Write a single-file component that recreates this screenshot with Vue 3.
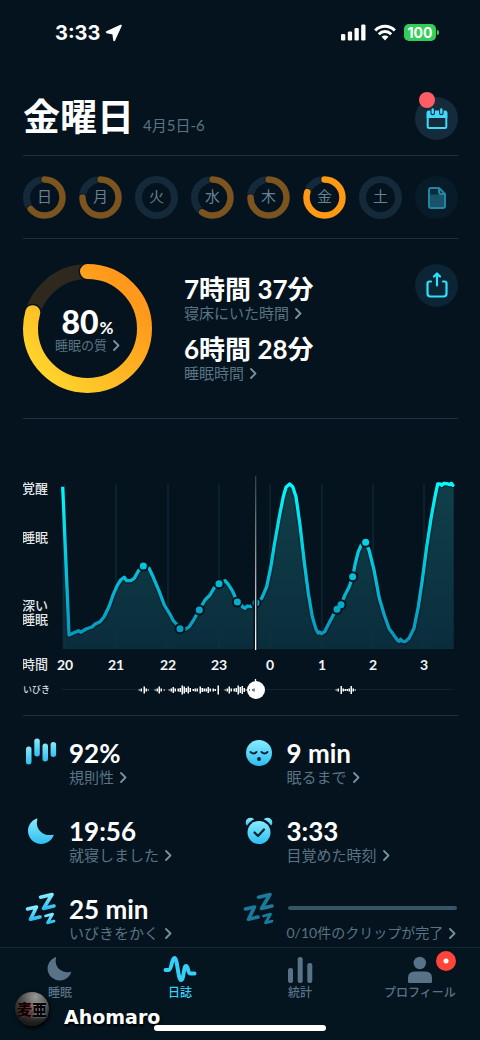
<script setup>
import { ref } from 'vue'

const position = ref(495)

const days = [
  { name: '日', progress: 64 },
  { name: '月', progress: 75 },
  { name: '火', progress: 0 },
  { name: '水', progress: 60 },
  { name: '木', progress: 75 },
  { name: '金', progress: 80, active: true },
  { name: '土', progress: 0 },
]

const metrics = [
  { icon: 'bars', value: '92%', label: '規則性' },
  { icon: 'face', value: '9 min', label: '眠るまで' },
  { icon: 'moon', value: '19:56', label: '就寝しました' },
  { icon: 'alarm', value: '3:33', label: '目覚めた時刻' },
  { icon: 'zzz', value: '25 min', label: 'いびきをかく' },
]

const tabs = [
  { icon: 'moon', label: '睡眠' },
  { icon: 'pulse', label: '日誌', active: true },
  { icon: 'stats', label: '統計' },
  { icon: 'person', label: 'プロフィール', badge: true },
]

/* Sleep depth samples, in thirds of a chart unit */
const samples = [
  [188, 50], [207, 495], [222, 488], [236, 482], [242, 487], [258, 477], [276, 471], [284, 463],
  [300, 455], [312, 441], [328, 408], [340, 373], [352, 346], [362, 330], [373, 322], [380, 332],
  [392, 332], [403, 325], [415, 303], [430, 289], [447, 295], [460, 322], [478, 365], [493, 405],
  [510, 433], [520, 452], [540, 474], [558, 477], [568, 470], [582, 448], [598, 420], [615, 390],
  [630, 375], [643, 353], [657, 342], [675, 332], [685, 343], [697, 362], [712, 395], [722, 402],
  [728, 411], [735, 415], [742, 408], [752, 410], [760, 402], [768, 398], [785, 385], [800, 350],
  [812, 293], [823, 225], [838, 140], [850, 80], [858, 52], [869, 42], [878, 50], [888, 80],
  [900, 165], [912, 270], [925, 370], [937, 440], [948, 478], [954, 489], [959, 486], [965, 491],
  [974, 485], [984, 465], [1000, 435], [1011, 418], [1023, 403], [1035, 375], [1047, 352],
  [1058, 320], [1066, 280], [1075, 245], [1084, 225], [1097, 217], [1107, 240], [1122, 300],
  [1138, 385], [1153, 435], [1168, 478], [1172, 482], [1192, 510], [1198, 514], [1202, 508],
  [1208, 514], [1215, 515], [1227, 505], [1242, 475], [1255, 410], [1267, 330], [1280, 230],
  [1294, 140], [1305, 80], [1313, 42], [1320, 42], [1326, 46], [1331, 40], [1340, 41],
  [1350, 44], [1354, 40], [1358, 46], [1361, 42],
].map(([x, y]) => [x / 3, 470 + y / 3])

const line = 'M' + samples.map(([x, y]) => `${x.toFixed(1)} ${y.toFixed(1)}`).join('L')
const area = `${line}V649H62.7Z`

const markers = [
  [430, 288], [540, 476], [598, 420], [657, 341], [712, 396], [768, 398],
  [1011, 418], [1023, 404], [1058, 320], [1097, 217],
].map(([x, y]) => [x / 3, 470 + y / 3])

const hours = ['20', '21', '22', '23', '0', '1', '2', '3'].map((label, i) => ({
  label,
  x: Math.round(65 + i * 51.3),
}))

/* Snoring waveform: offset and height of each bar */
const wave = [
  [77, 1], [79, 3], [82, 7], [84, 3], [86, 1], [93, 1], [95, 3], [97, 7], [99, 3], [102, 1],
  [107, 1], [109, 3], [111, 6], [113, 3], [116, 3], [118, 4], [120, 9], [122, 7], [124, 4],
  [126, 7], [128, 4], [131, 2], [133, 3], [135, 3], [138, 7], [140, 4], [142, 3], [144, 3],
  [146, 6], [148, 3], [151, 3], [153, 2], [156, 9], [163, 1], [165, 3], [167, 7], [169, 3],
  [172, 3], [174, 4], [176, 9], [178, 6], [180, 8], [182, 4], [184, 1],
  [274, 1], [276, 3], [279, 8], [281, 3], [283, 2], [285, 2], [287, 3], [289, 8], [291, 3], [293, 1],
]
</script>

<template>
  <div class="app">
    <svg class="defs" width="0" height="0" aria-hidden="true">
      <defs>
        <linearGradient id="ice" x1="0" y1="0" x2="0" y2="1">
          <stop offset="0" stop-color="#86ecff" />
          <stop offset="1" stop-color="#2fbdf0" />
        </linearGradient>
        <symbol id="chevron" viewBox="0 0 8 12">
          <path d="M2 2l4.500 4.500L2 11" fill="none" stroke="currentColor" stroke-width="1.800" stroke-linecap="round" stroke-linejoin="round" />
        </symbol>
        <symbol id="moon" viewBox="0 0 36 36">
          <path d="M13.600 5.600c.5-.3 1 .1.8.7-1.500 5.200.200 9.800 3.600 12.600 3.500 2.900 7.900 3.700 11.700 2.800.7-.2 1.200.3.900.9C28.600 27.600 23.900 31 18.300 31 10.900 31 5 25.100 5 18c0-5.400 3.300-10.200 8.600-12.400Z" />
        </symbol>
        <symbol id="zzz" viewBox="0 0 36 36">
          <g fill="none" stroke-width="3.600" stroke-linecap="round" stroke-linejoin="round">
            <path d="M17.500 6.200l11.500-2.700-8.500 14 10.500-2.500" />
            <path d="M4.500 18l9-2-6 12.300 9.500-2.300" />
            <path d="M22.500 25l7-1.800-5 8.600 6.500-1.600" stroke-width="2.800" />
          </g>
        </symbol>
      </defs>
    </svg>

    <main class="content">
      <div class="status">
        <div class="clock">
          <span>3:33</span>
          <svg width="18" height="18" viewBox="0 0 18 18"><path d="M15.800 1.700 1.800 8.200l6.500 1.300.900 6.700Z" fill="#fff" stroke="#fff" stroke-width="2" stroke-linejoin="round" /></svg>
        </div>
        <div class="signals">
          <svg width="25" height="17" viewBox="0 0 25 17" fill="#fff">
            <rect x="0" y="10" width="4.300" height="6.500" rx="1.300" /><rect x="6.800" y="7.500" width="4.300" height="9" rx="1.300" />
            <rect x="13.500" y="4" width="4.300" height="12.500" rx="1.300" /><rect x="20.200" y=".5" width="4.300" height="16" rx="1.300" />
          </svg>
          <svg width="22" height="17" viewBox="0 0 22 17">
            <g fill="none" stroke="#fff" stroke-width="3">
              <path d="M1.200 6.500c5.500-5.600 14.100-5.600 19.600 0" /><path d="M4.800 10.200c3.500-3.500 8.900-3.500 12.400 0" />
            </g>
            <path d="M7.500 12.800c2-1.900 5-1.900 7 0L11 16.400Z" fill="#fff" />
          </svg>
          <span class="battery">100</span>
        </div>
      </div>

      <header class="heading">
        <h1>金曜日</h1>
        <span class="date">4月5日-6</span>
        <button class="round calendar" type="button" aria-label="カレンダー">
          <svg width="22" height="22" viewBox="0 0 22 22">
            <rect x="1.700" y="4" width="18.600" height="16" rx="1.500" fill="none" stroke="#41d9fb" stroke-width="2" />
            <path d="M.7 4.500q0-2 2-2h16.600q2 0 2 2v5.500H.7Z" fill="#41d9fb" />
            <path d="M6.700 1v4M15.300 1v4" stroke="#152a3a" stroke-width="4.600" stroke-linecap="round" />
            <path d="M6.700 1.500v3.200M15.300 1.500v3.200" stroke="#41d9fb" stroke-width="2.400" stroke-linecap="round" />
          </svg>
          <span class="dot"></span>
        </button>
      </header>

      <nav class="week" aria-label="曜日">
        <button v-for="day in days" :key="day.name" class="day" :class="{ active: day.active }" type="button">
          <svg viewBox="0 0 43 43">
            <g fill="none" transform="rotate(-90 21.500 21.500)">
              <circle cx="21.500" cy="21.500" r="18" stroke="#142a3a" stroke-width="7" />
              <template v-if="day.progress">
                <circle cx="21.500" cy="21.500" r="18" pathLength="100" :stroke-dasharray="`${day.progress} 100`" stroke="#04131d" stroke-width="8" stroke-linecap="round" />
                <circle class="arc" cx="21.500" cy="21.500" r="18" pathLength="100" :stroke-dasharray="`${day.progress} 100`" stroke-width="6.500" stroke-linecap="round" />
              </template>
            </g>
          </svg>
          <span>{{ day.name }}</span>
        </button>
        <button class="round notes" type="button" aria-label="メモ">
          <svg width="20" height="24" viewBox="0 0 20 24">
            <path d="M4 2h8l6 6v12q0 2-2 2H4q-2 0-2-2V4q0-2 2-2Z" fill="#0c2b3a" />
            <path d="M2 8.500h16V20q0 2-2 2H4q-2 0-2-2Z" fill="#19536a" />
            <path d="M4 2h8l6 6v12q0 2-2 2H4q-2 0-2-2V4q0-2 2-2ZM12 2v4q0 2 2 2h4" fill="none" stroke="#2485a2" stroke-width="2" stroke-linejoin="round" />
          </svg>
        </button>
      </nav>

      <section class="summary">
        <a class="quality" href="#quality">
          <svg viewBox="0 0 129 129">
            <defs>
              <linearGradient id="gold" x1=".2" y1="0" x2=".9" y2=".75">
                <stop offset="0" stop-color="#ffd52c" /><stop offset="1" stop-color="#ff991b" />
              </linearGradient>
            </defs>
            <g fill="none" transform="rotate(-90 64.500 64.500)">
              <circle cx="64.500" cy="64.500" r="57" stroke="#2e281f" stroke-width="15" />
              <circle cx="64.500" cy="64.500" r="57" pathLength="100" stroke-dasharray="79.500 100" stroke="#04131d" stroke-width="18" stroke-linecap="round" />
              <circle cx="64.500" cy="64.500" r="57" pathLength="100" stroke-dasharray="79.500 100" stroke="url(#gold)" stroke-width="15" stroke-linecap="round" />
            </g>
          </svg>
          <span class="score">80<small>%</small></span>
          <span class="label small">睡眠の質<svg class="chevron"><use href="#chevron" /></svg></span>
        </a>
        <div class="times">
          <a href="#bed"><strong>7時間 37分</strong><span class="label">寝床にいた時間<svg class="chevron"><use href="#chevron" /></svg></span></a>
          <a href="#asleep"><strong>6時間 28分</strong><span class="label">睡眠時間<svg class="chevron"><use href="#chevron" /></svg></span></a>
        </div>
        <button class="round share" type="button" aria-label="共有">
          <svg width="24" height="28" viewBox="0 0 24 28" fill="none" stroke="#2fe0fa" stroke-width="2.200" stroke-linecap="round" stroke-linejoin="round">
            <path d="M6 9.500H4.500Q2.500 9.500 2.500 11.500v10q0 3 3 3h13q3 0 3-3v-10q0-2-2-2H18M12 13.500V2M9 4.500l3-3 3 3" />
          </svg>
        </button>
      </section>

      <section class="sleep">
        <svg class="chart" viewBox="23 470 435 208" role="img" aria-label="睡眠グラフ">
          <defs>
            <linearGradient id="depth" gradientUnits="userSpaceOnUse" x1="0" y1="484" x2="0" y2="642">
              <stop offset="0" stop-color="#00fcff" /><stop offset=".3" stop-color="#00dcea" /><stop offset="1" stop-color="#0893bb" />
            </linearGradient>
            <linearGradient id="fill" gradientUnits="userSpaceOnUse" x1="0" y1="484" x2="0" y2="649">
              <stop offset="0" stop-color="#103f49" /><stop offset="1" stop-color="#0a2d3c" />
            </linearGradient>
            <linearGradient id="cursor" gradientUnits="userSpaceOnUse" x1="0" y1="476" x2="0" y2="650">
              <stop offset="0" stop-color="#33404a" /><stop offset=".6" stop-color="#a9b1b6" /><stop offset="1" stop-color="#fff" />
            </linearGradient>
          </defs>
          <path :d="area" fill="url(#fill)" />
          <line v-for="hour in hours" :key="hour.label" class="grid" :x1="hour.x" :x2="hour.x" y1="484" y2="649" />
          <path :d="line" class="halo" />
          <path :d="line" class="curve" />
          <circle v-for="(m, i) in markers" :key="`h${i}`" :cx="m[0]" :cy="m[1]" r="5.500" fill="#04131d" />
          <circle v-for="(m, i) in markers" :key="`p${i}`" :cx="m[0]" :cy="m[1]" r="3.500" fill="url(#depth)" />
          <path d="M255.500 476V650" stroke="#04131d" stroke-width="4" />
          <rect x="255" y="476" width="1.300" height="174" fill="url(#cursor)" />
          <g class="axis">
            <text x="22" y="493">覚醒</text>
            <text x="22" y="542">睡眠</text>
            <text x="22" y="610">深い</text>
            <text x="22" y="624">睡眠</text>
            <text x="22" y="669">時間</text>
          </g>
          <g class="hours">
            <text v-for="hour in hours" :key="hour.label" :x="hour.x" y="670">{{ hour.label }}</text>
          </g>
        </svg>
        <div class="snore">
          <label for="snore">いびき</label>
          <div class="track">
            <input id="snore" v-model="position" type="range" min="0" max="1000" />
            <svg class="wave" viewBox="0 0 391 22" preserveAspectRatio="none">
              <rect v-for="([x, h], i) in wave" :key="i" :x="x - 0.5" :y="11 - h / 2" width="1.500" :height="h" />
              <path d="M193.500 0v3" stroke="#fff" stroke-width="1.300" />
              <path d="M187 11h1M190 11h1M192 9.500v3" stroke="#3c4750" stroke-width="1.300" />
            </svg>
          </div>
        </div>
      </section>

      <section class="metrics">
        <a v-for="m in metrics" :key="m.label" class="metric" href="#metric">
          <svg class="icon" viewBox="0 0 36 36" fill="url(#ice)">
            <template v-if="m.icon === 'bars'">
              <rect x="3" y="11.500" width="5.500" height="18" rx="2.700" /><rect x="11.300" y="3.500" width="5.500" height="18" rx="2.700" />
              <rect x="19.500" y="8.500" width="5.500" height="18" rx="2.700" /><rect x="27.600" y="7" width="5.500" height="15" rx="2.700" />
            </template>
            <template v-else-if="m.icon === 'face'">
              <circle cx="18" cy="18" r="13" />
              <path d="M9.500 17q3 3 6 0M20.500 17q3 3 6 0" fill="none" stroke="#06212e" stroke-width="1.800" stroke-linecap="round" />
              <circle cx="18" cy="24" r="1.900" fill="#06212e" />
            </template>
            <use v-else-if="m.icon === 'moon'" href="#moon" />
            <template v-else-if="m.icon === 'alarm'">
              <circle cx="9.500" cy="9.500" r="4.800" /><circle cx="26.500" cy="9.500" r="4.800" />
              <circle cx="18" cy="19" r="13.500" fill="#04131d" />
              <circle cx="18" cy="19.500" r="11.500" />
              <path d="M13.500 19.500l3.500 3.500 6-6.500" fill="none" stroke="#06212e" stroke-width="2.200" stroke-linecap="round" stroke-linejoin="round" />
            </template>
            <use v-else href="#zzz" stroke="url(#ice)" />
          </svg>
          <span class="text">
            <strong>{{ m.value }}</strong>
            <span class="label">{{ m.label }}<svg class="chevron"><use href="#chevron" /></svg></span>
          </span>
        </a>
        <a class="metric" href="#clips">
          <svg class="icon" viewBox="0 0 36 36"><use href="#zzz" stroke="#197a9b" /></svg>
          <span class="text clips">
            <span class="bar"></span>
            <span class="label">0/10件のクリップが完了<svg class="chevron"><use href="#chevron" /></svg></span>
          </span>
        </a>
      </section>
    </main>

    <footer class="footer">
      <nav class="tabs">
        <a v-for="tab in tabs" :key="tab.label" class="tab" :class="{ active: tab.active }" href="#tab">
          <svg viewBox="0 0 36 28" fill="currentColor">
            <use v-if="tab.icon === 'moon'" href="#moon" x="1" y="-3" width="33" height="33" />
            <path v-else-if="tab.icon === 'pulse'" d="M3.500 15H6.500c3.500 0 3-12 6-12S16 25 19 25s2.500-14 5-14 1.500 7.500 4.500 7.500h4" fill="none" stroke="currentColor" stroke-width="4" stroke-linecap="round" stroke-linejoin="round" />
            <template v-else-if="tab.icon === 'stats'">
              <rect x="6" y="13" width="5" height="15" rx="2.200" /><rect x="15.700" y="2" width="5" height="26" rx="2.200" /><rect x="25.300" y="8" width="5" height="20" rx="2.200" />
            </template>
            <template v-else>
              <circle cx="17.800" cy="8" r="6.200" /><path d="M6 26.500V23q0-6.500 6.500-6.500h11q6.500 0 6.500 6.500v3.500q0 1.500-1.500 1.500h-21Q6 28 6 26.500Z" />
            </template>
          </svg>
          <span>{{ tab.label }}</span>
          <i v-if="tab.badge" class="badge"></i>
        </a>
      </nav>
      <div class="signature">
        <span class="avatar"><b>麦</b><b>亜</b></span>
        <span>Ahomaro</span>
      </div>
      <div class="home"></div>
    </footer>
  </div>
</template>

<style>
body { background: #04131d; }
</style>

<style scoped>
* { box-sizing: border-box; }
.app {
  display: flex;
  flex-direction: column;
  height: 100vh;
  background: #04131d;
  color: #fff;
  font-family: Lato, "Noto Sans CJK JP", sans-serif;
}
.defs { position: absolute; }
a { color: inherit; text-decoration: none; }
button { border: 0; padding: 0; font: inherit; cursor: pointer; }
svg { display: block; flex: none; }
.content { flex: 1; min-height: 0; padding: 0 22px 0 23px; overflow-y: auto; scrollbar-width: none; }

.status {
  display: flex;
  justify-content: space-between;
  align-items: center;
  height: 65px;
  padding: 0 20px 0 32px;
  font-family: Inter, sans-serif;
}
.clock, .signals { display: flex; align-items: center; }
.clock { gap: 5px; font-size: 20px; font-weight: 700; }
.signals { gap: 8px; }
.battery {
  position: relative;
  width: 32px;
  height: 17px;
  margin-right: 2px;
  border-radius: 5px;
  background: #32ce59;
  font-size: 14px;
  font-weight: 700;
  line-height: 17px;
  text-align: center;
}
.battery::after {
  content: "";
  position: absolute;
  right: -3px;
  top: 6px;
  width: 2px;
  height: 5px;
  border-radius: 0 2px 2px 0;
  background: #32ce59;
}

.heading { display: flex; align-items: center; gap: 9px; padding: 32px 0 15px; border-bottom: 1px solid #1a3141; }
h1 { margin: 0; padding-bottom: 3px; font-size: 37px; font-weight: 700; line-height: 40px; }
.date { padding-top: 12px; color: #5a7384; font-size: 15px; line-height: 20px; }
.round {
  position: relative;
  display: grid;
  place-items: center;
  width: 43px;
  height: 43px;
  border-radius: 50%;
  background: #0b2534;
}
.calendar { margin-left: auto; background: #152a3a; }
.notes { background: #071c28; }
.dot { position: absolute; left: 4px; top: -5px; width: 16px; height: 16px; border-radius: 50%; background: #ff5d66; }

.week { display: flex; justify-content: space-between; padding: 20px 0 19px; border-bottom: 1px solid #1a3141; }
.day { display: grid; place-items: center; width: 43px; height: 43px; background: none; color: #688093; font-size: 15px; line-height: 20px; }
.day > * { grid-area: 1 / 1; }
.day span { padding-bottom: 3px; }
.day svg { width: 43px; height: 43px; }
.arc { stroke: #7b5420; }
.active .arc { stroke: #ff9914; }

.summary { display: flex; align-items: flex-start; padding: 25px 0; border-bottom: 1px solid #1a3141; }
.quality { display: grid; grid-template-rows: 43px 30px 16px 40px; justify-items: center; width: 129px; }
.quality > svg { grid-area: 1 / 1 / 5 / 2; width: 129px; height: 129px; }
.score { grid-area: 2 / 1; font-size: 32px; font-weight: 900; line-height: 30px; }
.score small { margin-left: 1px; font-size: 17px; font-weight: 700; }
.label { display: flex; align-items: center; gap: 5px; color: #5a7384; font-size: 15px; line-height: 18px; white-space: nowrap; }
.label.small { grid-area: 3 / 1; font-size: 13px; line-height: 16px; }
.chevron { width: 8px; height: 12px; color: #7890a0; }
.times { display: flex; flex-direction: column; gap: 12px; padding: 10px 0 0 32px; }
strong { display: block; font-size: 26px; font-weight: 700; line-height: 30px; white-space: nowrap; }
.share { margin-left: auto; }

.sleep { padding: 51px 0 14px; border-bottom: 1px solid #1a3141; }
.chart { width: 100%; height: auto; }
.grid { stroke: #12303e; stroke-width: 1; }
.curve { fill: none; stroke: url(#depth); stroke-width: 3.3; stroke-linejoin: round; }
.halo { fill: none; stroke: #04131d; stroke-opacity: .5; stroke-width: 6; stroke-linejoin: round; }
.axis { fill: #e2e6e9; font-size: 13px; font-weight: 500; }
.hours { fill: #f2f4f5; font-size: 14px; font-weight: 700; text-anchor: middle; }
.snore { display: flex; align-items: center; height: 23px; }
.snore label { width: 39px; color: #d8dee2; font-size: 9px; font-weight: 500; }
.track { position: relative; flex: 1; height: 22px; margin-right: 5px; }
.wave { position: absolute; inset: 0; width: 100%; height: 22px; fill: #fff; pointer-events: none; }
input[type="range"] { display: block; appearance: none; width: 100%; height: 22px; margin: 0; background: none; }
input[type="range"]::-webkit-slider-runnable-track { height: 18px; background: linear-gradient(#0b2430, #0b2430) center / 100% 1px no-repeat; }
input[type="range"]::-webkit-slider-thumb { appearance: none; width: 18px; height: 18px; border-radius: 50%; background: #fff; }

.metrics { display: grid; grid-template-columns: 1fr 1fr; row-gap: 28px; padding-top: 22px; }
.metric { display: flex; gap: 10px; height: 50px; min-width: 0; }
.icon { width: 36px; height: 36px; margin-top: -3px; }
.text { flex: 1; min-width: 0; }
.clips .label { font-size: 14px; }
.bar { display: block; height: 4px; margin: 12px 1px 14px; border-radius: 2px; background: #395466; }

.footer { position: relative; height: 93px; padding-top: 7px; border-top: 1px solid #132631; background: #05151f; }
.tabs { display: grid; grid-template-columns: repeat(4, 1fr); }
.tab { position: relative; display: flex; flex-direction: column; align-items: center; color: #587288; font-size: 12px; font-weight: 500; line-height: 18px; }
.tab svg { width: 36px; height: 28px; margin-bottom: 1px; }
.tab.active { color: #35d0fa; }
.badge {
  position: absolute;
  top: -4px;
  left: calc(50% + 16px);
  width: 20px;
  height: 20px;
  border-radius: 50%;
  background: radial-gradient(circle, #fff 2px, #ff453a 3px);
}
.signature {
  position: absolute;
  left: 15px;
  bottom: 14px;
  display: flex;
  align-items: flex-start;
  gap: 15px;
  height: 34px;
  font: 700 19px/24px "DejaVu Sans", sans-serif;
  text-shadow: 1px 2px 2px #000;
}
.signature > span:last-child { padding-top: 13px; }
.avatar {
  display: flex;
  align-items: center;
  justify-content: center;
  width: 34px;
  height: 34px;
  border-radius: 50%;
  background: radial-gradient(circle at 60% 15%, #999, #4c4c4c 40%, #1c1c1c 75%);
  box-shadow: 1px 2px 4px #000;
  color: #050505;
  font: 900 15px/32px "Noto Sans CJK JP", sans-serif;
  text-shadow: 0 0 2px #aaa;
}
.avatar b:first-child { text-shadow: 1px 0 1px #e5303c; }
.home { position: absolute; left: 32%; right: 32%; bottom: 9px; height: 6px; border-radius: 3px; background: #fff; }
</style>
